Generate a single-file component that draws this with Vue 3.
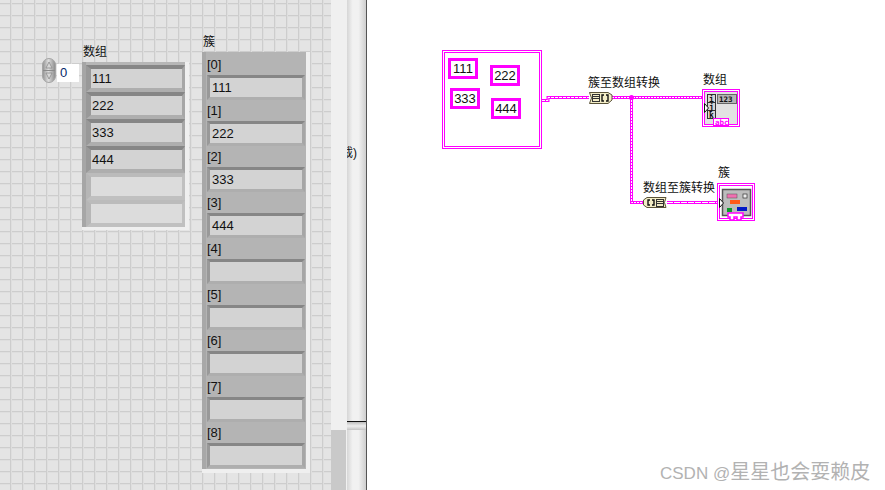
<template>
  <div class="screen">
    <!-- front panel -->
    <div class="panel">
      <div class="index-box">
        <div class="spinner">
          <svg width="14" height="25" viewBox="0 0 14 25">
            <defs>
              <linearGradient id="spin" x1="0" x2="1" y1="0" y2="0">
                <stop offset="0" stop-color="#8f8f8f" />
                <stop offset="0.45" stop-color="#dedede" />
                <stop offset="1" stop-color="#8a8a8a" />
              </linearGradient>
            </defs>
            <rect x="0.5" y="0.5" width="13" height="24" rx="6.5" fill="url(#spin)" stroke="#a5a5a5" />
            <line x1="1" y1="12.5" x2="13" y2="12.5" stroke="#8a8a8a" />
            <path d="M7 4 L10 10 L4 10 Z" fill="#d8d8d8" stroke="#8a8a8a" stroke-width="0.8" />
            <path d="M7 21 L10 15 L4 15 Z" fill="#d8d8d8" stroke="#8a8a8a" stroke-width="0.8" />
          </svg>
        </div>
        <div class="index-field">0</div>
      </div>

      <div class="array-label">数组</div>
      <div class="array-frame">
        <div
          v-for="(item, i) in arrayItems"
          :key="i"
          class="element"
          :class="{ inactive: !item }"
        >
          <span class="element-text">{{ item }}</span>
        </div>
      </div>

      <div class="cluster-label">簇</div>
      <div class="cluster-frame">
        <div v-for="(item, i) in clusterItems" :key="i" class="cluster-row">
          <div class="row-label">[{{ i }}]</div>
          <div class="element small">
            <span class="element-text">{{ item }}</span>
          </div>
        </div>
      </div>
    </div>

    <div class="scrollbar">
      <div class="thumb"></div>
    </div>

    <div class="splitter">
      <div class="clipped">裁)</div>
      <div class="grip"></div>
    </div>

    <!-- block diagram -->
    <div class="diagram">
      <svg width="518" height="490" viewBox="367 0 518 490" class="diagram-svg">
        <!-- array constant -->
        <rect x="442.5" y="50.5" width="99" height="98" fill="none" stroke="#f0f" />
        <rect x="444.5" y="52.5" width="95" height="94" fill="none" stroke="#f0f" />
        <g v-for="c in constants" :key="c.text">
          <rect :x="c.x + 1.5" :y="c.y + 1.5" :width="c.w - 3" :height="c.h - 3" fill="#fff" stroke="#f0f" stroke-width="3" />
          <text :x="c.x + 15" :y="c.y + 15" class="const-text">{{ c.text }}</text>
        </g>

        <!-- wires -->
        <g fill="none">
          <path d="M542 100.5 H548 V97.5 H589" stroke="#f0f" stroke-width="3" />
          <path d="M542 100.5 H548 V97.5 H589" stroke="#fff" stroke-width="1" stroke-dasharray="3 1" />
          <path d="M612 97.5 H703" stroke="#f0f" stroke-width="3" />
          <path d="M612 97.5 H703" stroke="#fff" stroke-width="1" stroke-dasharray="2 1" />
          <path d="M631.5 97 V202.5 H643" stroke="#f0f" stroke-width="3" />
          <path d="M631.5 97 V202.5 H643" stroke="#fff" stroke-width="1" stroke-dasharray="2 1" />
          <path d="M667 202.5 H718" stroke="#f0f" stroke-width="3" />
          <path d="M667 202.5 H718" stroke="#fff" stroke-width="1" stroke-dasharray="6 1" />
        </g>
        <circle cx="631.5" cy="97.5" r="2.5" fill="#f0f" />

        <!-- cluster to array node -->
        <g>
          <path d="M589.5 92.5 H608 L612 95 V100 L608 103.5 H589.5 L591.5 98 Z" fill="#f3edc6" stroke="#5a5338" />
          <rect x="592.5" y="94.5" width="7" height="7" fill="none" stroke="#333" />
          <path d="M593 96.5 H599 M593 98.5 H599" stroke="#333" />
          <path d="M604 95 H602 V101 H604 M606 95 H608 V101 H606" fill="none" stroke="#111" stroke-width="1.4" />
        </g>

        <!-- array to cluster node -->
        <g>
          <path d="M647 197.5 H666 L664.5 202.5 L666 207.5 H647 L643.5 205 V200 Z" fill="#f3edc6" stroke="#5a5338" />
          <path d="M650 200 H648 V205 H650 M652 200 H654 V205 H652" fill="none" stroke="#111" stroke-width="1.4" />
          <rect x="656.5" y="199.5" width="7" height="7" fill="none" stroke="#333" />
          <path d="M657 201.5 H663 M657 203.5 H663" stroke="#333" />
        </g>

        <!-- array indicator -->
        <g>
          <rect x="702.5" y="89.5" width="37" height="37" fill="#fff" stroke="#f0f" />
          <rect x="704.5" y="91.5" width="33" height="33" fill="#e2e2e2" stroke="#f0f" />
          <rect x="707.5" y="94.5" width="8" height="8" fill="#d5d5d5" stroke="#333" />
          <rect x="707.5" y="102.5" width="8" height="8" fill="#d5d5d5" stroke="#333" />
          <rect x="707.5" y="110.5" width="8" height="8" fill="#d5d5d5" stroke="#333" />
          <text x="711.5" y="101.5" class="idx">i</text>
          <text x="711.5" y="109.5" class="idx">j</text>
          <text x="711.5" y="117.5" class="idx">k</text>
          <rect x="717.5" y="94.5" width="19" height="9" fill="#b5b5b5" stroke="#666" />
          <text x="719" y="102" class="num">123</text>
          <rect x="713.5" y="118.5" width="15" height="7" fill="#fff" stroke="#f0f" />
          <text x="715" y="125" class="abc">abc</text>
          <path d="M704.5 103.5 L708.5 108 L704.5 112.5 Z" fill="#fff" stroke="#111" />
        </g>

        <!-- cluster indicator -->
        <g>
          <rect x="717.5" y="183.5" width="37" height="37" fill="#fff" stroke="#f0f" />
          <rect x="719.5" y="185.5" width="33" height="33" fill="#fff" stroke="#f0f" />
          <rect x="722.5" y="189.5" width="28" height="26" fill="#bdbdbd" stroke="#555" stroke-width="1.5" />
          <rect x="727" y="194" width="10" height="4" fill="#f070b0" stroke="#555" stroke-width="0.5" />
          <rect x="743" y="194" width="4" height="4" fill="#eee" stroke="#333" stroke-width="0.7" />
          <rect x="730" y="200" width="10" height="4" fill="#ff5a1a" />
          <rect x="727" y="208" width="5" height="4" fill="#0a9a2a" />
          <rect x="737" y="207" width="10" height="4" fill="#0018c8" />
          <path d="M728 213 H743 V217 H741 V220 H737 V217 H734 V220 H730 V217 H728 Z" fill="#fff" stroke="#f0f" stroke-width="1.5" />
          <path d="M719.5 198.5 L723.5 203 L719.5 207.5 Z" fill="#fff" stroke="#111" />
        </g>

        <text x="588" y="87" class="label">簇至数组转换</text>
        <text x="703" y="84" class="label">数组</text>
        <text x="718" y="177" class="label">簇</text>
        <text x="643" y="192" class="label">数组至簇转换</text>
      </svg>

      <div class="watermark">
        <span class="wm-latin">CSDN @</span><span class="wm-cjk">星星也会耍赖皮</span>
      </div>
    </div>
  </div>
</template>

<script setup>
const arrayItems = ['111', '222', '333', '444', '', '']
const clusterItems = ['111', '222', '333', '444', '', '', '', '', '']

const constants = [
  { text: '111', x: 448, y: 58, w: 30, h: 21 },
  { text: '222', x: 490, y: 65, w: 30, h: 21 },
  { text: '333', x: 450, y: 88, w: 30, h: 21 },
  { text: '444', x: 491, y: 98, w: 30, h: 21 }
]
</script>

<style>
html,
body {
  margin: 0;
  padding: 0;
  background: #fff;
}
</style>

<style scoped>
.screen {
  display: flex;
  width: 885px;
  height: 490px;
  overflow: hidden;
  font-family: "Liberation Sans", "Noto Sans CJK SC", sans-serif;
  font-size: 13px;
  color: #111;
}

.panel {
  position: relative;
  width: 331px;
  flex: none;
  background-color: #e4e4e4;
  background-image:
    linear-gradient(to right, #cdcdcd 1px, #dedede 1px, #dedede 2px, transparent 2px),
    linear-gradient(to bottom, #cdcdcd 1px, #dedede 1px, #dedede 2px, transparent 2px);
  background-size: 12px 12px;
  background-position: 10px 3px;
}

.index-box {
  position: absolute;
  left: 42px;
  top: 58px;
  display: flex;
  align-items: flex-start;
  gap: 1px;
}

.spinner {
  height: 25px;
}

.spinner svg {
  display: block;
}

.index-field {
  width: 19px;
  height: 18px;
  margin-top: 6px;
  padding-left: 3px;
  background: #fff;
  line-height: 18px;
  color: #062a6a;
}

.array-label {
  position: absolute;
  left: 83px;
  top: 44px;
  font-size: 12px;
  line-height: 16px;
}

.array-frame {
  position: absolute;
  left: 82px;
  top: 62px;
  width: 99px;
  height: 162px;
  padding: 3px 0 0 4px;
  background: #b6b6b6;
  border-right: 4px solid #efefef;
  border-bottom: 3px solid #efefef;
  box-shadow: inset 4px 0 0 #a6a6a6;
}

.element {
  width: 99px;
  height: 27px;
  box-sizing: border-box;
  border-style: solid;
  border-width: 4px 3px 4px 5px;
  border-color: #868686 #a6a6a6 #aeaeae #999;
  background: #d3d3d3;
  line-height: 19px;
}

.element.inactive {
  border-color: #bbb #c0c0c0 #c0c0c0 #b6b6b6;
  background: #dcdcdc;
}

.element.small {
  width: 98px;
  height: 25px;
  margin-left: 1px;
  border-width: 3px;
  line-height: 19px;
}

.element-text {
  padding-left: 1px;
}

.element.small .element-text {
  padding-left: 2px;
}

.cluster-label {
  position: absolute;
  left: 203px;
  top: 34px;
  font-size: 12px;
  line-height: 16px;
}

.cluster-frame {
  position: absolute;
  left: 202px;
  top: 52px;
  width: 100px;
  height: 415px;
  padding: 2px 0 0 4px;
  background: #b4b4b4;
  border-right: 4px solid #efefef;
  border-bottom: 4px solid #efefef;
  box-shadow: inset 4px 0 0 #a8a8a8;
}

.cluster-row {
  height: 46px;
}

.row-label {
  height: 21px;
  padding-left: 1px;
  line-height: 21px;
}

.scrollbar {
  position: relative;
  width: 16px;
  flex: none;
  background: #f0f0f0;
}

.thumb {
  position: absolute;
  left: 0;
  top: 430px;
  width: 15px;
  height: 60px;
  background: #c9c9c9;
}

.splitter {
  position: relative;
  width: 19px;
  flex: none;
  border-right: 1px solid #555;
  background: linear-gradient(to right, #d6d6d6, #f1f1f1 30%, #f1f1f1 60%, #cfcfcf);
}

.clipped {
  position: absolute;
  left: -6px;
  top: 145px;
  width: 20px;
  font-size: 12px;
  line-height: 16px;
  white-space: nowrap;
  clip-path: inset(0 0 0 6px);
}

.grip {
  position: absolute;
  left: 0;
  top: 421px;
  width: 100%;
  height: 9px;
  border-top: 1px solid #111;
  box-sizing: border-box;
  background: linear-gradient(to bottom, #bcbcbc, #eee 50%, #c4c4c4);
}

.diagram {
  position: relative;
  flex: 1;
  background: #fff;
}

.diagram-svg {
  display: block;
}

.label {
  font-size: 12px;
  fill: #111;
}

.const-text {
  font-size: 13px;
  fill: #111;
  text-anchor: middle;
}

.idx {
  font-size: 8px;
  font-weight: bold;
  fill: #111;
  text-anchor: middle;
  font-family: "DejaVu Sans Mono", monospace;
}

.num {
  font-size: 7.5px;
  font-weight: bold;
  fill: #111;
  font-family: "DejaVu Sans Mono", monospace;
}

.abc {
  font-size: 7.5px;
  font-weight: bold;
  fill: #f0f;
  font-family: "DejaVu Sans Mono", monospace;
}

.watermark {
  position: absolute;
  left: 293px;
  top: 460px;
  color: #b2b2b2;
  line-height: 24px;
  white-space: nowrap;
}

.wm-latin {
  font-size: 17px;
}

.wm-cjk {
  font-size: 20px;
}
</style>
